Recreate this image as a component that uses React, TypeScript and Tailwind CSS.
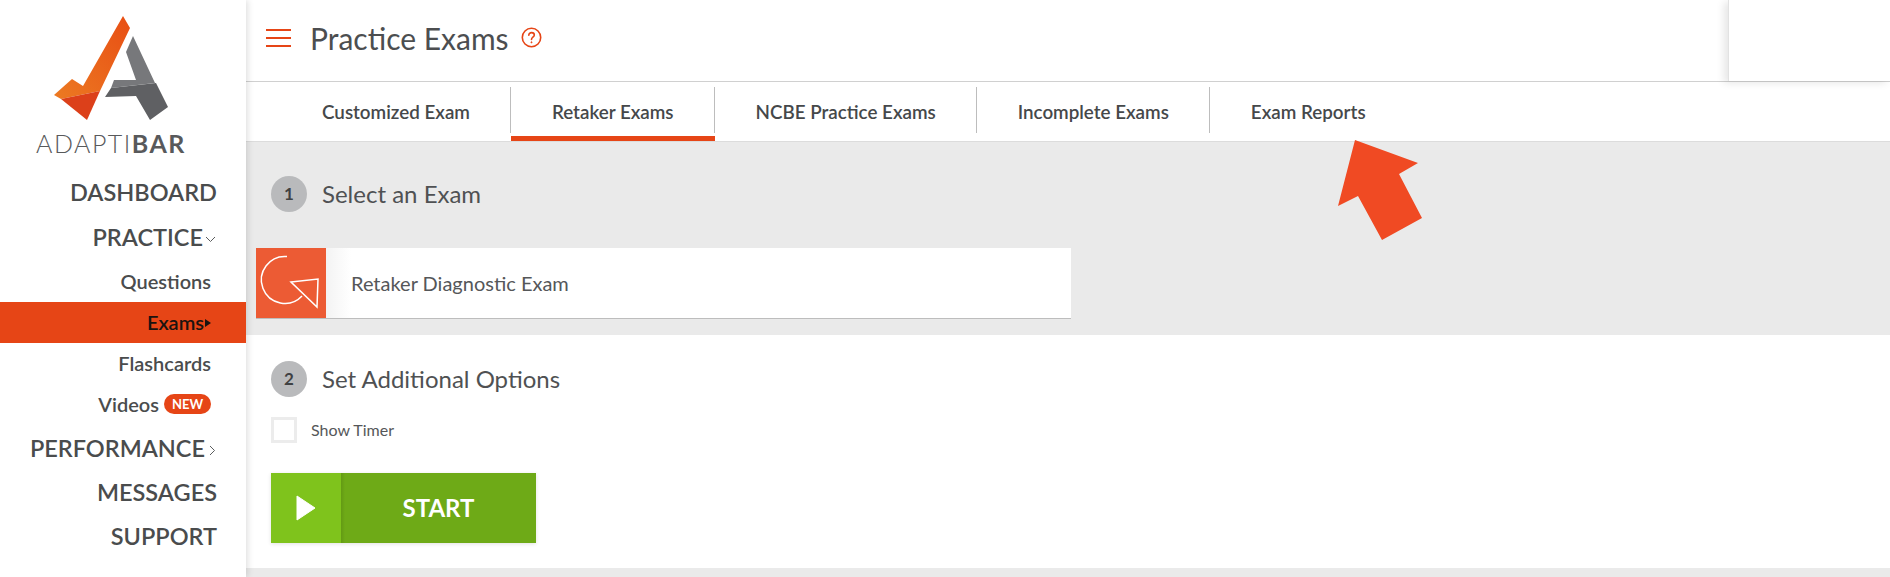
const font = { fontFamily: '"Lato", "Noto Sans", sans-serif' };

function Logo() {
  return (
    <div className="flex flex-col items-start h-[171px] pl-[36px] pt-[16px]">
      <svg width="120" height="105" viewBox="54 16 120 105" className="ml-[18px] shrink-0">
        <defs>
          <linearGradient id="lg1" x1="0" y1="1" x2="1" y2="0">
            <stop offset="0" stopColor="#ec7a22" />
            <stop offset="1" stopColor="#e84e14" />
          </linearGradient>
        </defs>
        <polygon points="123,16 130,28 100,91 61,99 54,95 72,79 83,86" fill="url(#lg1)" />
        <polygon points="61,99 100,91 87,120" fill="#dc401a" />
        <polygon points="133,36 155,83 111,88 114,80 136,80 126,52" fill="#77787b" />
        <polygon points="111,88 156,83 168,107 150,120 136,96 105,97" fill="#5f6063" />
      </svg>
      <div className="text-[25px] leading-[30px] tracking-[1.5px] text-[#58595b] mt-[7px] whitespace-nowrap font-light">
        ADAPTI<span className="font-bold">BAR</span>
      </div>
    </div>
  );
}

function Main({ children, icon, narrow, className = "" }: { children: React.ReactNode; icon?: React.ReactNode; narrow?: boolean; className?: string }) {
  return (
    <div className={"h-[44px] flex items-center justify-end text-[23.5px] font-semibold text-[#4a4c4d] " + (narrow ? "pr-[30px] " : "pr-[29px] ") + className}>
      {children}
      {icon}
    </div>
  );
}

function Sub({ children, active }: { children: React.ReactNode; active?: boolean }) {
  return (
    <div
      className={
        "h-[41px] flex items-center justify-end pr-[35px] pb-[2px] text-[20px] font-semibold " +
        (active ? "bg-[#e64516] text-[#1a1310]" : "text-[#4a4c4d]")
      }
    >
      {children}
    </div>
  );
}

function Sidebar() {
  return (
    <aside className="w-[246px] shrink-0 bg-white relative z-20 shadow-[2px_0_6px_rgba(0,0,0,0.12)] h-[577px] overflow-hidden">
      <Logo />
      <Main>DASHBOARD</Main>
      <Main
        narrow
        className="mt-[1px]"
        icon={
          <svg width="11" height="7" viewBox="0 0 11 7" className="ml-[2px] mt-[2px]" fill="none" stroke="#5a5c5d" strokeWidth="1">
            <path d="M1 1l4.500 4.500L10 1" />
          </svg>
        }
      >
        PRACTICE
      </Main>
      <div className="h-[23px] flex items-center justify-end pr-[35px] text-[20px] font-semibold text-[#4a4c4d] mt-[9px] mb-[10px]">
        Questions
      </div>
      <Sub active>
        Exams
        <svg width="6" height="8" viewBox="0 0 6 8" className="ml-[1px] mt-[2px]"><path d="M0 0l6 4-6 4z" fill="#1a1310" /></svg>
      </Sub>
      <Sub>Flashcards</Sub>
      <Sub>
        Videos
        <span className="ml-[5px] h-[20px] w-[47px] rounded-full bg-[#e64516] text-white text-[13px] leading-[20px] font-bold text-center">NEW</span>
      </Sub>
      <Main
        narrow
        className="mt-[2px]"
        icon={
          <svg width="7" height="11" viewBox="0 0 7 11" className="ml-[4px] mt-[2px]" fill="none" stroke="#5a5c5d" strokeWidth="1">
            <path d="M1 1l4.500 4.500L1 10" />
          </svg>
        }
      >
        PERFORMANCE
      </Main>
      <Main>MESSAGES</Main>
      <Main>SUPPORT</Main>
    </aside>
  );
}

function Tab({ children, active, last }: { children: React.ReactNode; active?: boolean; last?: boolean }) {
  return (
    <div className="relative h-full flex items-center px-[41px] pt-[1px] text-[18.8px] font-semibold text-[#45484a] whitespace-nowrap">
      <span>{children}</span>
      {!last && <span className="absolute right-0 top-[5px] h-[46px] w-px bg-[#bdbdbd]" />}
      {active && <span className="absolute left-0 right-0 bottom-0 h-[5px] bg-[#e64516]" />}
    </div>
  );
}

function Step({ n, children }: { n: number; children: React.ReactNode }) {
  return (
    <div className="flex items-center gap-[15px] pl-[25px] text-[24px] leading-[36px] text-[#4f5153]">
      <span className="w-[36px] h-[36px] rounded-full bg-[#b9babc] text-[#3f4143] text-[17px] font-bold flex items-center justify-center">{n}</span>
      {children}
    </div>
  );
}

export default function App() {
  return (
    <div className="w-[1890px] h-[577px] overflow-hidden flex bg-white relative" style={font}>
      <Sidebar />
      <main className="flex-1 min-w-0 relative">
        <header className="h-[82px] border-b border-[#d0d0d0] flex items-center pl-[20px] pb-[6px] relative bg-white">
          <div className="flex flex-col gap-[6px] w-[25px]">
            <span className="h-[2px] bg-[#e64516]" />
            <span className="h-[2px] bg-[#e64516]" />
            <span className="h-[2px] bg-[#e64516]" />
          </div>
          <h1 className="ml-[19px] text-[30px] font-normal text-[#4c4e50] leading-none">Practice Exams</h1>
          <svg width="21" height="21" viewBox="0 0 21 21" className="ml-[12px]" fill="none" stroke="#e64516" strokeWidth="1.6">
            <circle cx="10.5" cy="10.5" r="9.2" />
            <path d="M7.800 8.200c0-1.600 1.200-2.600 2.800-2.600s2.700 1 2.700 2.400c0 2.200-2.800 2.200-2.800 4.400" strokeLinecap="round" />
            <circle cx="10.5" cy="15.3" r="0.6" fill="#e64516" strokeWidth="0.8" />
          </svg>
          <div className="absolute right-0 top-0 w-[162px] h-[81px] bg-white border-l border-[#e2e2e2] shadow-[-4px_2px_8px_rgba(0,0,0,0.1)]" />
        </header>
        <nav className="h-[60px] pl-[35px] flex border-b border-[#dcdcdc] bg-white">
          <Tab>Customized Exam</Tab>
          <Tab active>Retaker Exams</Tab>
          <Tab>NCBE Practice Exams</Tab>
          <Tab>Incomplete Exams</Tab>
          <Tab last>Exam Reports</Tab>
        </nav>
        <section className="h-[193px] bg-[#eaeaea] pt-[34px]">
          <Step n={1}>Select an Exam</Step>
          <div className="mt-[36px] ml-[10px] w-[815px] h-[71px] bg-white border-b border-[#bdbdbd] flex items-center">
            <div className="w-[70px] h-[70px] bg-[#ec5b34] shrink-0">
              <svg width="70" height="70" viewBox="0 0 70 70" fill="none" stroke="#fff" strokeWidth="1.5">
                <path d="M31 8.500A23.500 23.500 0 1 0 46 48" />
                <path d="M35 34l27-3-1 28z" />
              </svg>
            </div>
            <div className="h-full w-[25px] bg-gradient-to-r from-[#f3f3f3] to-white" />
            <span className="text-[20px] text-[#555759] -mt-[1px]">Retaker Diagnostic Exam</span>
          </div>
        </section>
        <section className="h-[233px] bg-white pt-[26px]">
          <Step n={2}>Set Additional Options</Step>
          <label className="flex items-center ml-[25px] mt-[20px]">
            <span className="w-[26px] h-[26px] border-[3px] border-[#ececec] bg-white" />
            <span className="ml-[14px] text-[16px] text-[#555759]">Show Timer</span>
          </label>
          <button className="ml-[25px] mt-[30px] w-[265px] h-[70px] bg-[#6eaa17] flex shadow-[0_1px_4px_rgba(0,0,0,0.12)]">
            <span className="w-[70px] h-full bg-[#7fc31c] flex items-center justify-center">
              <svg width="20" height="26" viewBox="0 0 20 26"><path d="M1 1l18 12L1 25z" fill="#fff" stroke="#fff" strokeLinejoin="round" /></svg>
            </span>
            <span className="w-[4px] h-full bg-gradient-to-r from-[#639a14] to-[#6eaa17]" />
            <span className="flex-1 flex items-center justify-center text-[24px] font-bold text-white -mt-[1px] pr-[4px]">START</span>
          </button>
        </section>
        <section className="h-[9px] bg-[#eaeaea]" />
      </main>
      <svg className="absolute left-[1338px] top-[140px]" width="84" height="100" viewBox="1338 140 84 100">
        <polygon points="1355,140 1418,163 1399,174 1422,218 1382,240 1358,196 1338,206" fill="#f04a23" />
      </svg>
    </div>
  );
}
